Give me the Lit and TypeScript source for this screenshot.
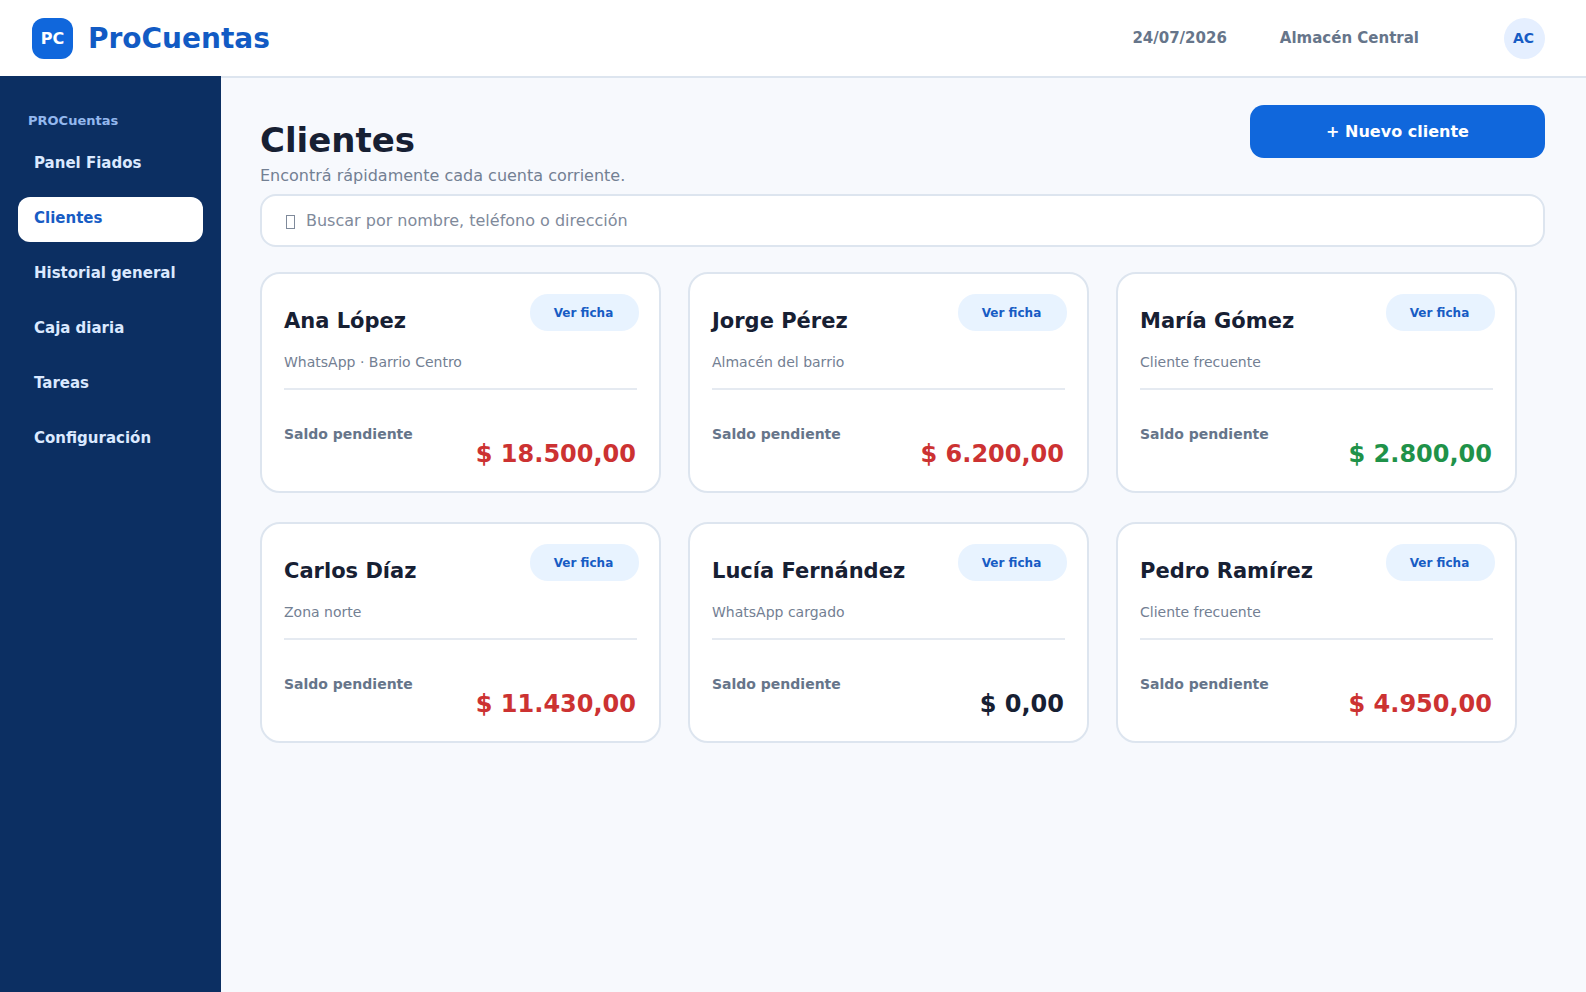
import { LitElement, html, css } from "lit";
import { customElement, property, state } from "lit/decorators.js";
import { classMap } from "lit/directives/class-map.js";

type Tone = "debt" | "low" | "clear";

interface Client {
  name: string;
  note: string;
  balance: string;
  tone: Tone;
}

const NAV_ITEMS = [
  "Panel Fiados",
  "Clientes",
  "Historial general",
  "Caja diaria",
  "Tareas",
  "Configuración",
];

const CLIENTS: Client[] = [
  { name: "Ana López", note: "WhatsApp · Barrio Centro", balance: "$ 18.500,00", tone: "debt" },
  { name: "Jorge Pérez", note: "Almacén del barrio", balance: "$ 6.200,00", tone: "debt" },
  { name: "María Gómez", note: "Cliente frecuente", balance: "$ 2.800,00", tone: "low" },
  { name: "Carlos Díaz", note: "Zona norte", balance: "$ 11.430,00", tone: "debt" },
  { name: "Lucía Fernández", note: "WhatsApp cargado", balance: "$ 0,00", tone: "clear" },
  { name: "Pedro Ramírez", note: "Cliente frecuente", balance: "$ 4.950,00", tone: "debt" },
];

@customElement("client-card")
export class ClientCard extends LitElement {
  @property({ attribute: false }) client!: Client;

  static styles = css`
    :host {
      display: block;
      min-width: 0;
    }
    .card {
      box-sizing: border-box;
      padding: 20px 22px 22px;
      border: 2px solid #dde5ef;
      border-radius: 20px;
      background: #ffffff;
    }
    .top {
      display: flex;
      align-items: flex-start;
      justify-content: space-between;
      gap: 8px;
      margin-right: -2px;
    }
    .name {
      margin: 13px 0 0;
      font-size: 21px;
      line-height: 28px;
      font-weight: 700;
      color: #172033;
    }
    .open {
      flex: none;
      box-sizing: border-box;
      width: 109px;
      height: 37px;
      padding: 2px 2px 0 0;
      border: 0;
      border-radius: 18px;
      background: #e8f3ff;
      color: #175cc4;
      font: 700 12px/35px "DejaVu Sans", sans-serif;
      cursor: pointer;
    }
    .note {
      margin: 17px 0 16px;
      font-size: 14px;
      line-height: 20px;
      color: #738093;
    }
    .balance {
      display: flex;
      align-items: flex-start;
      justify-content: space-between;
      flex-wrap: wrap;
      margin: 0;
      padding: 34px 1px 0 0;
      border-top: 2px solid #e5eaf1;
    }
    .label {
      font-size: 14px;
      line-height: 20px;
      font-weight: 700;
      color: #66758a;
    }
    .amount {
      margin: 15px 0 0 auto;
      font-size: 24px;
      line-height: 30px;
      font-weight: 700;
      white-space: nowrap;
    }
    .debt {
      color: #cc3232;
    }
    .low {
      color: #1f9249;
    }
    .clear {
      color: #172033;
    }
  `;

  render() {
    const { name, note, balance, tone } = this.client;
    return html`
      <article class="card">
        <div class="top">
          <h2 class="name">${name}</h2>
          <button class="open" type="button">Ver ficha</button>
        </div>
        <p class="note">${note}</p>
        <dl class="balance">
          <dt class="label">Saldo pendiente</dt>
          <dd class=${classMap({ amount: true, [tone]: true })}>${balance}</dd>
        </dl>
      </article>
    `;
  }
}

@customElement("app-root")
export class AppRoot extends LitElement {
  @state() private current = "Clientes";

  static styles = css`
    :host {
      display: flex;
      flex-direction: column;
      min-height: 100vh;
      font-family: "DejaVu Sans", sans-serif;
      background: #f7f9fd;
      color: #172033;
    }
    .header {
      display: flex;
      align-items: center;
      justify-content: space-between;
      padding: 18px 41px 17px 32px;
      background: #ffffff;
    }
    .brand {
      display: flex;
      align-items: center;
      gap: 15px;
      color: #125bc4;
      font-size: 28px;
      line-height: 36px;
      font-weight: 700;
      text-decoration: none;
    }
    .mark {
      width: 41px;
      height: 41px;
      border-radius: 12px;
      background: #1067dc;
      color: #ffffff;
      font-size: 16px;
      line-height: 41px;
      text-align: center;
    }
    .session {
      display: flex;
      align-items: center;
      font-size: 15px;
      line-height: 20px;
      font-weight: 700;
      color: #66758a;
    }
    .date,
    .store {
      padding-bottom: 2px;
    }
    .store {
      margin: 0 85px 0 53px;
    }
    .avatar {
      box-sizing: border-box;
      width: 41px;
      height: 41px;
      padding-right: 2px;
      border-radius: 50%;
      background: #e5efff;
      color: #175cc4;
      font-size: 14px;
      line-height: 41px;
      text-align: center;
    }
    .body {
      display: flex;
      flex: 1;
    }
    .sidebar {
      box-sizing: border-box;
      flex: none;
      width: 221px;
      padding: 35px 18px;
      background: #0c2f62;
    }
    .group {
      margin: 0 10px 11px;
      font-size: 13px;
      line-height: 20px;
      font-weight: 700;
      color: #94b8ee;
    }
    .nav {
      display: flex;
      flex-direction: column;
      gap: 10px;
    }
    .link {
      padding: 11px 16px 14px;
      border-radius: 12px;
      font-size: 15px;
      line-height: 20px;
      font-weight: 700;
      color: #dbe9ff;
      text-decoration: none;
    }
    .active {
      background: #ffffff;
      color: #175cc4;
    }
    .main {
      flex: 1;
      min-width: 0;
      padding: 27px 41px 40px 39px;
      border-top: 2px solid #dde5ef;
    }
    .heading {
      display: flex;
      align-items: flex-start;
      justify-content: space-between;
      gap: 24px;
    }
    .title {
      margin: 15px 0 4px;
      font-size: 34px;
      line-height: 40px;
      font-weight: 700;
    }
    .lead {
      margin: 0;
      font-size: 16px;
      line-height: 24px;
      color: #738093;
    }
    .create {
      width: 295px;
      height: 53px;
      padding: 0;
      border: 0;
      border-radius: 14px;
      background: #1067dc;
      color: #ffffff;
      font: 700 16px/53px "DejaVu Sans", sans-serif;
      cursor: pointer;
    }
    .search {
      display: flex;
      align-items: center;
      gap: 11px;
      box-sizing: border-box;
      height: 53px;
      margin: 6px 0 25px;
      padding: 0 24px;
      border: 2px solid #dde5ef;
      border-radius: 16px;
      background: #ffffff;
      color: #7f8a9b;
    }
    .glyph {
      flex: none;
      width: 9px;
      height: 14px;
      margin-top: 2px;
    }
    .field {
      flex: 1;
      min-width: 0;
      height: 24px;
      padding: 0;
      border: 0;
      outline: 0;
      background: none;
      color: #172033;
      font: 400 16px/24px "DejaVu Sans", sans-serif;
    }
    .field::placeholder {
      color: #7f8a9b;
      opacity: 1;
    }
    .grid {
      display: grid;
      grid-template-columns: repeat(3, 1fr);
      gap: 29px 27px;
      padding-right: 28px;
    }
  `;

  private select(event: Event, item: string) {
    event.preventDefault();
    this.current = item;
  }

  render() {
    return html`
      <header class="header">
        <a class="brand" href="#">
          <span class="mark">PC</span>
          <span>ProCuentas</span>
        </a>
        <div class="session">
          <time class="date" datetime="2026-07-24">24/07/2026</time>
          <span class="store">Almacén Central</span>
          <span class="avatar">AC</span>
        </div>
      </header>
      <div class="body">
        <aside class="sidebar">
          <p class="group">PROCuentas</p>
          <nav class="nav">
            ${NAV_ITEMS.map(
              (item) => html`<a
                class=${classMap({ link: true, active: item === this.current })}
                href="#"
                @click=${(event: Event) => this.select(event, item)}
                >${item}</a
              >`,
            )}
          </nav>
        </aside>
        <main class="main">
          <div class="heading">
            <div>
              <h1 class="title">Clientes</h1>
              <p class="lead">Encontrá rápidamente cada cuenta corriente.</p>
            </div>
            <button class="create" type="button">+ Nuevo cliente</button>
          </div>
          <label class="search">
            <svg class="glyph" viewBox="0 0 9 14" fill="none" stroke="currentColor" aria-hidden="true">
              <rect x="0.5" y="0.5" width="8" height="13" />
            </svg>
            <input
              class="field"
              type="text"
              aria-label="Buscar clientes"
              placeholder="Buscar por nombre, teléfono o dirección"
            />
          </label>
          <section class="grid">
            ${CLIENTS.map((client) => html`<client-card .client=${client}></client-card>`)}
          </section>
        </main>
      </div>
    `;
  }
}
